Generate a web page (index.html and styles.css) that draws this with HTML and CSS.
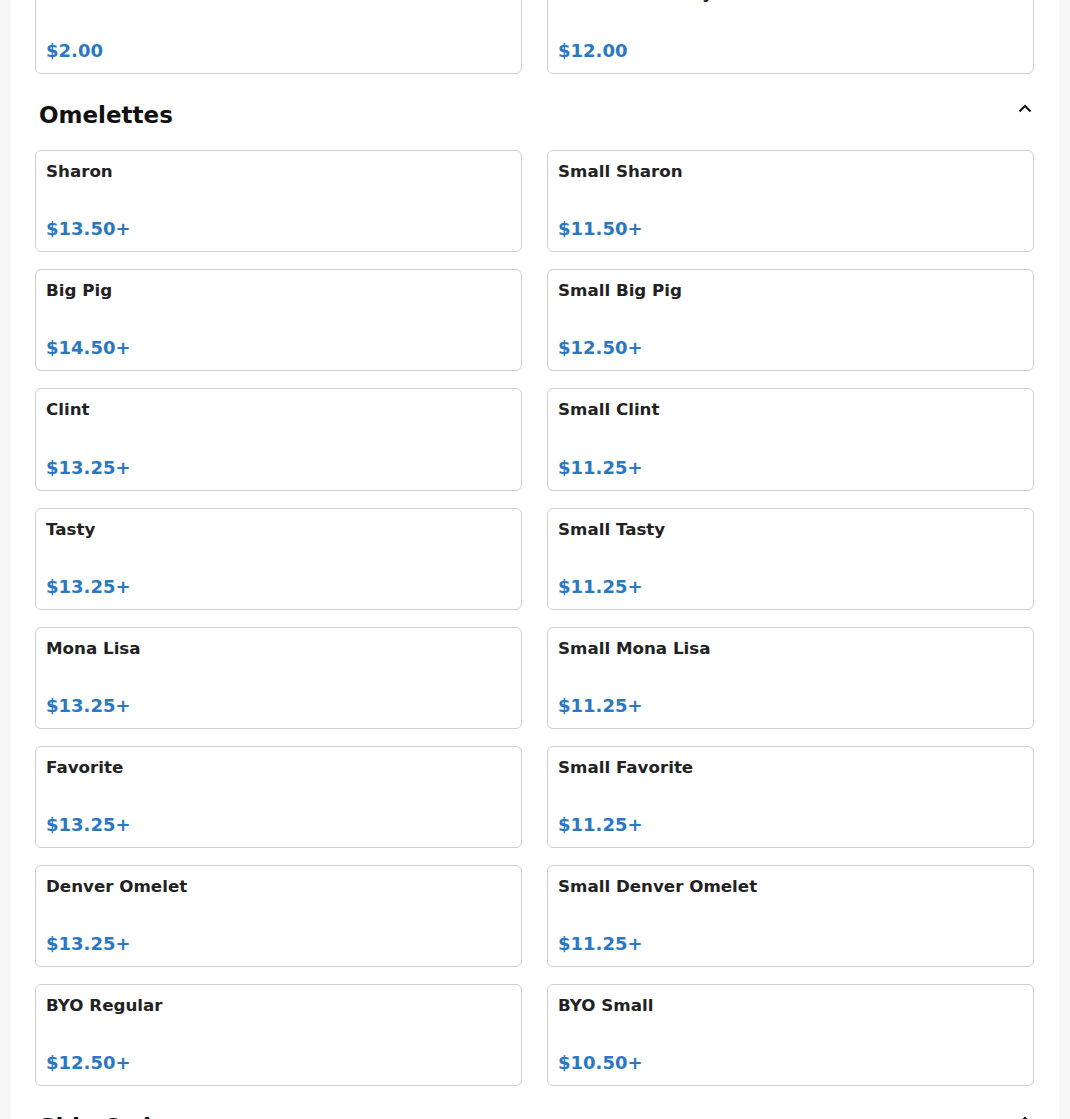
FILE: index.html
```html
<!DOCTYPE html>
<html>
<head>
<meta charset="utf-8">
<link rel="stylesheet" href="styles.css">
</head>
<body>
<div class="panel">
  <div class="grid">
    <div class="card"><div class="name">Toast</div><div class="price">$2.00</div></div>
    <div class="card"><div class="name">Biscuits &amp; Gravy</div><div class="price">$12.00</div></div>
  </div>

  <div class="section-head">
    <h2>Omelettes</h2>
    <svg class="chev" width="14" height="9" viewBox="0 0 14 9"><path d="M1.5 7.5 L7 2 L12.5 7.5" fill="none" stroke="#111" stroke-width="2"/></svg>
  </div>
  <div class="grid">
    <div class="card"><div class="name">Sharon</div><div class="price">$13.50+</div></div>
    <div class="card"><div class="name">Small Sharon</div><div class="price">$11.50+</div></div>
    <div class="card"><div class="name">Big Pig</div><div class="price">$14.50+</div></div>
    <div class="card"><div class="name">Small Big Pig</div><div class="price">$12.50+</div></div>
    <div class="card"><div class="name">Clint</div><div class="price">$13.25+</div></div>
    <div class="card"><div class="name">Small Clint</div><div class="price">$11.25+</div></div>
    <div class="card"><div class="name">Tasty</div><div class="price">$13.25+</div></div>
    <div class="card"><div class="name">Small Tasty</div><div class="price">$11.25+</div></div>
    <div class="card"><div class="name">Mona Lisa</div><div class="price">$13.25+</div></div>
    <div class="card"><div class="name">Small Mona Lisa</div><div class="price">$11.25+</div></div>
    <div class="card"><div class="name">Favorite</div><div class="price">$13.25+</div></div>
    <div class="card"><div class="name">Small Favorite</div><div class="price">$11.25+</div></div>
    <div class="card"><div class="name">Denver Omelet</div><div class="price">$13.25+</div></div>
    <div class="card"><div class="name">Small Denver Omelet</div><div class="price">$11.25+</div></div>
    <div class="card"><div class="name">BYO Regular</div><div class="price">$12.50+</div></div>
    <div class="card"><div class="name">BYO Small</div><div class="price">$10.50+</div></div>
  </div>

  <div class="section-head">
    <h2>Side Orders</h2>
    <svg class="chev" width="14" height="9" viewBox="0 0 14 9"><path d="M1.5 7.5 L7 2 L12.5 7.5" fill="none" stroke="#111" stroke-width="2"/></svg>
  </div>
</div>
</body>
</html>
```

FILE: styles.css
```css
html, body {
  margin: 0;
  padding: 0;
  height: 100%;
  overflow: hidden;
}
body {
  background: #f7f7f7;
  font-family: "DejaVu Sans", "Liberation Sans", sans-serif;
}
.panel {
  margin: -28px 11px 0 11px;
  background: #ffffff;
  padding: 0 25px 40px 24px;
  min-height: 1300px;
}
.grid {
  display: grid;
  grid-template-columns: 1fr 1fr;
  column-gap: 25px;
  row-gap: 17px;
}
.card {
  box-sizing: border-box;
  height: 102.15px;
  border: 1px solid #cfcfcf;
  border-radius: 6px;
  padding: 11px 10px 10px 10px;
  display: flex;
  flex-direction: column;
  justify-content: space-between;
}
.name {
  font-size: 16.7px;
  font-weight: bold;
  color: #222;
  line-height: 18px;
}
.price {
  font-size: 18px;
  font-weight: bold;
  color: #2a78c2;
  line-height: 24px;
}
.section-head {
  display: flex;
  align-items: center;
  justify-content: space-between;
  padding: 0 2px 0 4px;
  margin: 26px 0 20px 0;
  height: 30px;
}
.section-head h2 {
  margin: 0;
  font-size: 23px;
  line-height: 30px;
  font-weight: bold;
  color: #111;
}
.chev {
  display: block;
  margin-top: -14px;
}
```
